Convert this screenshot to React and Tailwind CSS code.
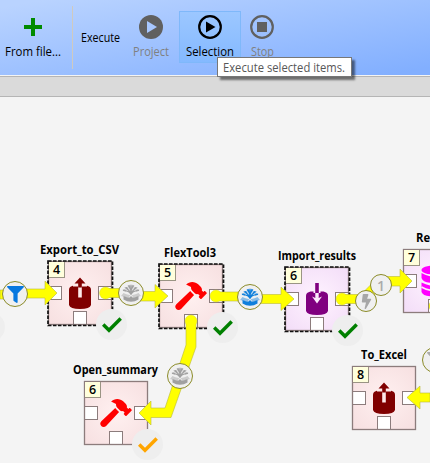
import { FaHammer, FaFilter, FaBolt } from 'react-icons/fa';

const FONT = "font-['Open_Sans','Noto_Sans',sans-serif]";

function Fit({ width, size, bold, className = '', children }) {
  return (
    <svg width={width} height="18" className={`block shrink-0 overflow-visible ${className}`}>
      <text x="0" y="13" fontSize={size} fontWeight={bold ? 700 : 400} textLength={width} lengthAdjust="spacingAndGlyphs" fill="currentColor">
        {children}
      </text>
    </svg>
  );
}

function ToolButton({ label, labelWidth, children, className = '' }) {
  return (
    <div className={`flex flex-col items-center ${className}`}>
      <div className="flex h-[26px] w-[26px] items-center justify-center">{children}</div>
      <Fit width={labelWidth} size={12} className="mt-[3px] h-[18px]">{label}</Fit>
    </div>
  );
}

function Port({ className }) {
  return <div className={`absolute h-[14px] w-[14px] border border-[#8c7c7c] bg-white ${className}`} />;
}

function Cylinder({ color, out }) {
  return (
    <svg viewBox="0 0 24 34" className="absolute left-[20px] top-[15px] h-[34px] w-[24px]">
      <path d="M1 13.5Q1 10.500 5.500 9.500H18.500Q23 10.500 23 13.500V29Q22 33 12 33Q2 33 1 29Z" fill={color} />
      {out ? (
        <>
          <path d="M5 8H19V10.500H5Z" fill="#fdeaea" />
          <path d="M10.200 9V21.500H13.800V9Z" fill="#fdeaea" />
          <path d="M12 1.500 17.500 7.500H13.800V11.500H10.200V7.500H6.500Z" fill={color} />
        </>
      ) : (
        <>
          <path d="M8.500 9H15.500V11H8.500Z" fill="#fbeafb" />
          <path d="M10.200 1H13.800V11H10.200Z" fill={color} />
          <path d="M10.300 11H13.700V16L17 14.500 12 21.500 7 14.500 10.300 16Z" fill="#fbeafb" />
        </>
      )}
    </svg>
  );
}

function Database() {
  return (
    <svg viewBox="0 0 26 32" className="absolute left-[18px] top-[16px] h-8 w-[26px]" fill="#ff00ff">
      <ellipse cx="13" cy="5" rx="12.5" ry="4.5" />
      <path d="M.5 8Q13 15 25.500 8V13Q24 18 13 18Q2 18 .5 13Z" />
      <path d="M.5 17.500Q13 24 25.500 17.500V27Q24 31.500 13 31.500Q2 31.500 .5 27ZM.5 22" />
      <path d="M.5 22Q13 29 25.500 22" fill="none" stroke="#fbeafb" strokeWidth="1.8" />
    </svg>
  );
}

function Node({ n, place, label, labelWidth, labelPlace, dashed, purple, icon }) {
  return (
    <>
      <div className={`absolute ${labelPlace}`}><Fit width={labelWidth} size={12.5} bold>{label}</Fit></div>
      <div className={`absolute h-[64px] w-[64px] ${place} ${purple ? 'bg-[radial-gradient(circle,#fff3ff,#f2dcf7)]' : 'bg-[radial-gradient(circle,#fff0f0,#f6dfe0)]'}`}>
        <Port className="left-0 top-[25px]" />
        <Port className="right-0 top-[25px]" />
        <Port className="bottom-0 left-[25px]" />
        <svg className="absolute inset-0 h-[64px] w-[64px] overflow-visible">
          <rect x="0.5" y="0.5" width="63" height="63" fill="none" stroke="#8c7c7c" strokeWidth="1.3" />
          {dashed && <rect x="0" y="0" width="64.5" height="64.5" fill="none" stroke="#111" strokeWidth="1.7" strokeDasharray="3.6 1.4" />}
        </svg>
        <div className="absolute left-px top-px h-4 w-4 border-b border-r border-[#9a9484] bg-[#ffffdc] text-center text-[12.5px] font-semibold leading-[15px]">{n}</div>
        {icon}
      </div>
    </>
  );
}

function LinkBadge({ place, children }) {
  return <div className={`absolute flex items-center justify-center rounded-full border border-[#8b8b28] bg-[#f0f0f0] ${place}`}>{children}</div>;
}

function Package({ color }) {
  return (
    <svg viewBox="0 0 22 20" className="h-5 w-[22px] shrink-0" fill={color}>
      <path d="M3.500 13Q7 14.500 9.500 14.500L11 13 12.500 14.500Q15 14.500 18.500 13V16.500Q15 18.800 11 18.800Q7 18.800 3.500 16.500Z" />
      <path d="M1 13 3.500 10Q6 11.500 10.500 12.200L9 14Q5 14.500 1 13ZM21 13 18.500 10Q16 11.500 11.500 12.200L13 14Q17 14.500 21 13Z" opacity=".45" />
      <path d="M11 12V3M10.500 10.500Q8 7.500 3 7.500M11.500 10.500Q14 7.500 19 7.500M10.700 9.500 6 4.500M11.300 9.500 16 4.500M11 8 8.800 2.500M11 8 13.200 2.500" fill="none" stroke={color} strokeWidth="1.2" />
      <path d="M2.500 7Q4 5.500 6.500 7L5.500 8.800ZM19.500 7Q18 5.500 15.500 7L16.500 8.800ZM4.300 4.800Q6 3 8.500 5L7.500 7ZM17.700 4.800Q16 3 13.500 5L14.500 7ZM7.500 2.800 9.500 1.800 10.500 4.500 9 5ZM14.500 2.800 12.500 1.800 11.500 4.500 13 5ZM10 2.500 11 1.200 12 2.500 11 5Z" opacity=".8" />
    </svg>
  );
}

function Status({ place, color = 'text-[#008000]' }) {
  return (
    <div className={`absolute flex h-[31px] w-[31px] items-center justify-center rounded-full bg-[#eeeeee] ${place} ${color}`}>
      <svg viewBox="0 0 20 16" className="h-4 w-5" fill="none" stroke="currentColor" strokeWidth="3.500"><path d="M1.200 7.500 7 13.200 18.700 1.500" /></svg>
    </div>
  );
}

const hammer = <FaHammer className="absolute left-[16px] top-[18px] h-[28px] w-[32px] text-[#ff0000]" />;

export default function App() {
  return (
    <div className={`flex h-[463px] w-[430px] flex-col overflow-hidden bg-[#f4f4f4] text-black ${FONT}`}>
      <header className="relative z-20 flex h-[75px] shrink-0 items-start bg-[linear-gradient(170deg,#b9d3ff_5%,#82afff_95%)]">
        <ToolButton label="From file..." labelWidth={56} className="ml-[5px] mt-[14px]">
          <svg viewBox="0 0 20 20" className="h-5 w-5"><path d="M10 1V19M1 10H19" stroke="#008b00" strokeWidth="4" /></svg>
        </ToolButton>
        <div className="ml-[11px] mt-[6px] h-[63px] w-px bg-[#cfcac0]" />
        <div className="ml-2 mt-[29px]"><Fit width={39} size={12}>Execute</Fit></div>
        <ToolButton label="Project" labelWidth={36} className="ml-[13px] mt-[14px] text-[#808080]">
          <svg viewBox="0 0 24 24" className="h-6 w-6"><circle cx="12" cy="12" r="12" fill="#606060" /><path d="M8 6V18L18 12Z" fill="#a7c7ff" /></svg>
        </ToolButton>
        <ToolButton label="Selection" labelWidth={48} className="ml-[10px] mt-[11px] h-[52px] w-[62px] border border-[#7fb8fa] bg-[linear-gradient(#9cc7ff,#84b9ff)] pt-[2px]">
          <svg viewBox="0 0 24 24" className="h-6 w-6"><circle cx="12" cy="12" r="10.800" fill="none" stroke="#000" strokeWidth="2.200" /><path d="M8 6.500V17.500L17.500 12Z" /></svg>
        </ToolButton>
        <ToolButton label="Stop" labelWidth={23} className="ml-[8px] mt-[14px] text-[#808080]">
          <svg viewBox="0 0 24 24" className="h-6 w-6"><circle cx="12" cy="12" r="10.800" fill="none" stroke="#606060" strokeWidth="2.200" /><path d="M7 7H17V17H7Z" fill="#606060" /></svg>
        </ToolButton>
        <div className="absolute left-[217px] top-[57px] h-5 w-[135px] border border-[#777] bg-white pl-[5px] text-[#575757] shadow-[3px_3px_2px_rgba(0,0,0,0.5)]">
          <Fit width={122} size={12} className="translate-y-px">Execute selected items.</Fit>
        </div>
      </header>
      <div className="h-[22px] shrink-0 border-b border-t border-b-[#b5b5b5] border-t-[#f4f4f4] bg-[#dadada] shadow-[inset_0_1px_0_#b5b5b5]" />
      <main className="relative flex-1">
        <div className="absolute -top-[97px] left-0 h-[463px] w-[430px]">
          <div className="absolute -left-[25px] top-[312px] h-[30px] w-[30px] rounded-full bg-[#eeeeee]" />
          <Node n="4" place="left-[48px] top-[261px]" label="Export_to_CSV" labelWidth={79} labelPlace="left-[40px] top-[241px]" dashed icon={<Cylinder color="#800000" out />} />
          <Node n="5" place="left-[159px] top-[264px]" label="FlexTool3" labelWidth={52} labelPlace="left-[164px] top-[244px]" dashed icon={hammer} />
          <Node n="6" place="left-[285px] top-[267px]" label="Import_results" labelWidth={78} labelPlace="left-[278px] top-[247px]" dashed purple icon={<Cylinder color="#800080" />} />
          <Node n="7" place="left-[403px] top-[249px]" label="Results" labelWidth={41} labelPlace="left-[416px] top-[229px]" purple icon={<Database />} />
          <Node n="6" place="left-[84px] top-[381px]" label="Open_summary" labelWidth={85} labelPlace="left-[73px] top-[361px]" icon={hammer} />
          <Node n="8" place="left-[352px] top-[366px]" label="To_Excel" labelWidth={46} labelPlace="left-[361px] top-[346px]" icon={<Cylinder color="#800000" out />} />
          <svg className="absolute inset-0 h-[463px] w-[430px]">
            <g fill="#ffff00" stroke="#b9b93c" strokeWidth=".6">
              <path d="M0 290H15L16 289H45V281L57 293 45 305V298H16L15 299H0Z" />
              <path d="M105 288.500H129L133 291.500H155V284.500L168 296 155 308V301H131L127 297.500H105Z" />
              <path d="M216 292H247L251 294.500H281V287L294 299 281 310.500V303.500H249L245 301H216Z" />
              <path d="M342 294.500H361L379 276.500H400V269L412 281 400 293V286H384L365 303.500H342Z" />
              <path d="M186 321H196V347L171 417.500H151V425L139 413 151 401V408H165L186 345Z" />
              <path d="M430 393H420V386L407 397.500 420 409V402H430Z" />
            </g>
            <g fill="#ffff00" stroke="#c8c83c" strokeWidth=".4"><circle cx="105.500" cy="293" r="6" /><circle cx="216" cy="296" r="6" /><circle cx="342" cy="299" r="6" /><circle cx="191" cy="321" r="6" /><circle cx="435" cy="306" r="6" /></g>
            <g fill="#ffff00"><path d="M105 289H114V297H105ZM216 292.500H225V300.500H216ZM342 295H351V303H342ZM186.500 321V330H195.500V321Z" /></g>
          </svg>
          <LinkBadge place="left-[2px] top-[281px] h-[26px] w-[26px]"><FaFilter className="h-[17px] w-[17px] text-[#0878df]" /></LinkBadge>
          <LinkBadge place="left-[118px] top-[280px] h-[26px] w-[26px]"><Package color="#a0a0a0" /></LinkBadge>
          <LinkBadge place="left-[237px] top-[284px] h-[26px] w-[26px]"><Package color="#0f7fdc" /></LinkBadge>
          <LinkBadge place="left-[167px] top-[363px] h-[26px] w-[26px]"><Package color="#a0a0a0" /></LinkBadge>
          <LinkBadge place="left-[355px] top-[290px] h-[22px] w-[22px]"><FaBolt className="h-[15px] w-[13px] text-[#a7a7a7]" /></LinkBadge>
          <LinkBadge place="left-[370px] top-[274px] h-[22px] w-[22px] text-[14px] font-semibold text-[#aaa]">1</LinkBadge>
          <LinkBadge place="left-[422px] top-[347px] h-[26px] w-[26px]"><FaFilter className="h-[17px] w-[17px] text-[#aaa]" /></LinkBadge>
          <Status place="left-[96px] top-[309px]" />
          <Status place="left-[207px] top-[312px]" />
          <Status place="left-[332px] top-[315px]" />
          <Status place="left-[132px] top-[429px]" color="text-[#ffa500]" />
        </div>
      </main>
    </div>
  );
}
